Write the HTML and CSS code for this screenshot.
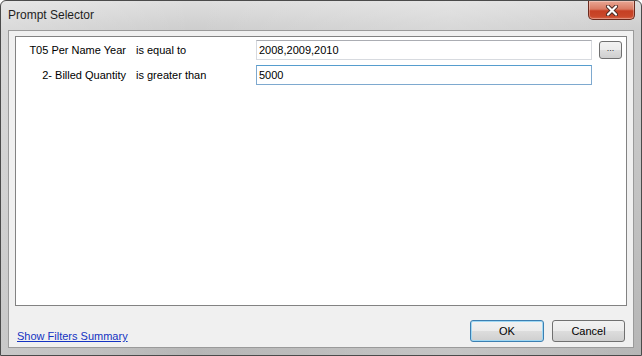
FILE: index.html
```html
<!DOCTYPE html>
<html>
  <head>
    <meta charset="UTF-8" />
    <title>Prompt Selector</title>
    <link rel="stylesheet" href="styles.css">
  </head>
  <body>
    <div class="window">
      <div class="titlebar">
        <span class="title">Prompt Selector</span>
        <div class="close-btn">
          <svg width="16" height="11" viewBox="0 0 16 11">
            <path d="M4 1.5 L12 9.5 M12 1.5 L4 9.5" stroke="#4a2a24" stroke-width="4" stroke-linecap="round" />
            <path d="M4 1.5 L12 9.5 M12 1.5 L4 9.5" stroke="#ffffff" stroke-width="2.2" stroke-linecap="round" />
          </svg>
        </div>
      </div>

      <div class="client">
        <div class="panel">
          <div class="prompt-row">
            <span class="field-name">T05 Per Name Year</span>
            <span class="operator">is equal to</span>
            <input type="text" class="value-input" value="2008,2009,2010" />
            <button class="browse-btn">...</button>
          </div>
          <div class="prompt-row">
            <span class="field-name">2- Billed Quantity</span>
            <span class="operator">is greater than</span>
            <input type="text" class="value-input focused" value="5000" />
          </div>
        </div>

        <div class="footer">
          <a href="#" class="summary-link">Show Filters Summary</a>
          <div class="actions">
            <button class="dlg-btn default">OK</button>
            <button class="dlg-btn">Cancel</button>
          </div>
        </div>
      </div>
    </div>
  </body>
</html>
```

FILE: styles.css
```css
* {
  box-sizing: border-box;
}

body {
  margin: 0;
  width: 642px;
  height: 356px;
  overflow: hidden;
  font-family: "Liberation Sans", Arial, sans-serif;
  font-size: 11px;
  color: #000;
  background-color: #fff;
}

.window {
  height: 356px;
  display: flex;
  flex-direction: column;
  padding: 0 7px 7px 7px;
  border: 1px solid #4b4b4b;
  border-radius: 6px 6px 0 0;
  background: linear-gradient(to right, rgba(255, 255, 255, 0.25), rgba(255, 255, 255, 0) 30%, rgba(255, 255, 255, 0.2) 70%, rgba(255, 255, 255, 0)),
    linear-gradient(#dedede, #cdcdcd 30px, #c2c2c2 200px, #b6b6b6);
}

.titlebar {
  height: 29px;
  display: flex;
  justify-content: space-between;
  align-items: flex-start;
}

.title {
  margin-top: 7px;
  font-size: 12px;
  color: #1e1e1e;
}

.close-btn {
  width: 47px;
  height: 19px;
  margin-right: -1px;
  display: flex;
  align-items: center;
  justify-content: center;
  border: 1px solid #6b2a1d;
  border-top: none;
  border-radius: 0 0 5px 5px;
  background: linear-gradient(#e9a794, #d97a63 45%, #c63f23 55%, #c9472a 85%, #d9664a);
  box-shadow: inset 0 0 0 1px rgba(255, 255, 255, 0.3);
}

.client {
  flex: 1;
  display: flex;
  flex-direction: column;
  background-color: #f0f0f0;
  border: 1px solid #9a9a9a;
}

.panel {
  height: 270px;
  margin: 5px 6px 0 6px;
  padding-top: 3px;
  background-color: #fff;
  border: 1px solid #828282;
}

.prompt-row {
  height: 25px;
  display: flex;
  align-items: flex-start;
}

.field-name {
  width: 110px;
  text-align: right;
  line-height: 20px;
}

.operator {
  width: 130px;
  padding-left: 10px;
  line-height: 20px;
}

.value-input {
  width: 336px;
  height: 20px;
  padding: 0 2px;
  font-family: inherit;
  font-size: 11px;
  border: 1px solid #d7dadf;
  border-top-color: #abadb3;
  outline: none;
  background-color: #fff;
}

.value-input.focused {
  border-color: #7ea9cf;
  border-top-color: #569dce;
}

.browse-btn {
  width: 23px;
  height: 18px;
  margin: 1px 0 0 7px;
  padding: 0 0 4px 0;
  font-family: inherit;
  font-size: 9px;
  line-height: 10px;
  color: #333;
  border: 1px solid #707070;
  border-radius: 3px;
  background: linear-gradient(#f2f2f2, #ebebeb 50%, #dddddd 50%, #cfcfcf);
}

.footer {
  flex: 1;
  display: flex;
  justify-content: space-between;
  align-items: flex-end;
  padding: 0 8px 5px 8px;
}

.summary-link {
  color: #1433c2;
  text-decoration: underline;
  margin-bottom: 0;
}

.actions {
  display: flex;
  gap: 8px;
}

.dlg-btn {
  width: 73px;
  height: 22px;
  padding: 0;
  font-family: inherit;
  font-size: 11px;
  color: #000;
  border: 1px solid #707070;
  border-radius: 3px;
  background: linear-gradient(#f2f2f2, #ebebeb 50%, #dddddd 50%, #cfcfcf);
}

.dlg-btn.default {
  width: 74px;
  border-color: #3c7fb1;
  box-shadow: inset 0 0 0 1px #9fd8f4;
}
```
